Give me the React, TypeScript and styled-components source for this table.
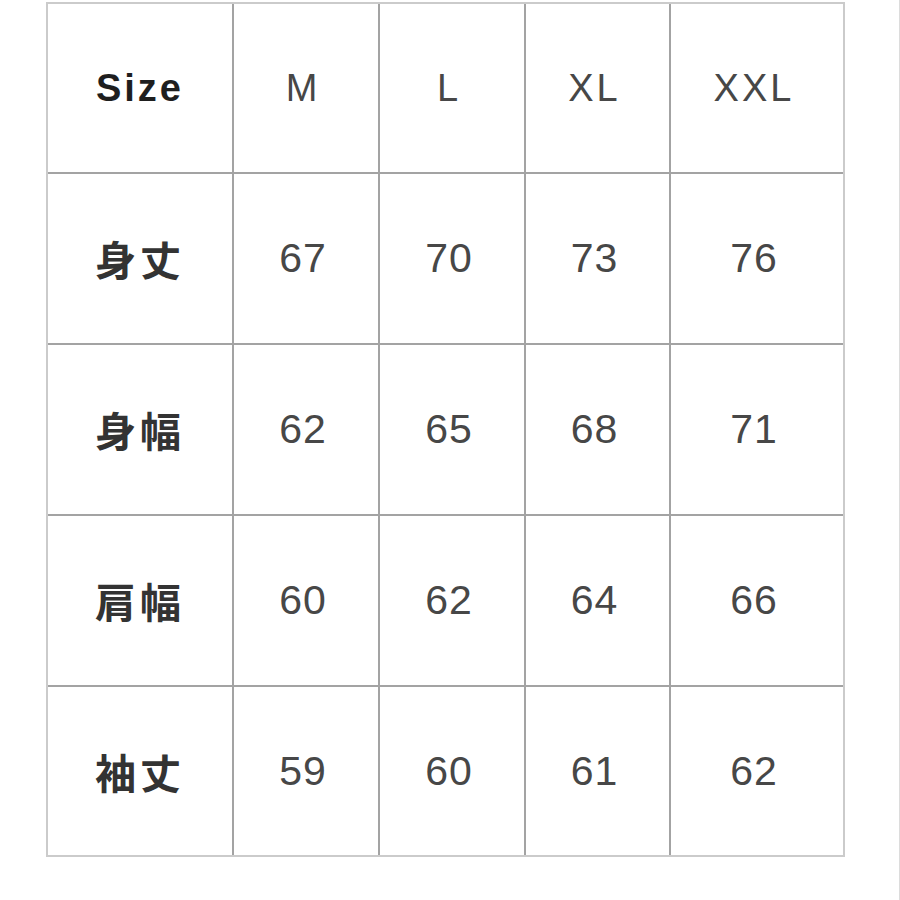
import React from "react";
import styled, { createGlobalStyle } from "styled-components";

const Global = createGlobalStyle`
  html, body { margin: 0; padding: 0; background: #ffffff; }
  * { box-sizing: border-box; }
`;

const Page = styled.div`
  width: 900px;
  height: 900px;
  padding: 2px 0 0 46px;
  border-right: 1px solid #dcdcdc;
  background: #ffffff;
`;

const Grid = styled.div`
  display: grid;
  grid-template-columns: 184px 144px 144px 143px 172px;
  grid-template-rows: 168px 169px 169px 169px 168px;
  gap: 2px;
  width: fit-content;
  background: #a3a3a3;
  border: 2px solid #cbcbcb;
`;

const Cell = styled.div<{ $kind: "corner" | "head" | "label" | "value" }>`
  background: #ffffff;
  display: flex;
  align-items: center;
  justify-content: center;
  padding-right: ${(p) => (p.$kind === "head" || p.$kind === "value" ? "6px" : "0")};
  font-family: ${(p) =>
    p.$kind === "label"
      ? '"Noto Sans CJK JP", "Noto Sans CJK SC", sans-serif'
      : '"Liberation Sans", Arial, sans-serif'};
  font-weight: ${(p) => (p.$kind === "corner" || p.$kind === "label" ? 700 : 400)};
  font-size: ${(p) => (p.$kind === "label" ? "41px" : p.$kind === "value" ? "41px" : "38px")};
  letter-spacing: ${(p) => (p.$kind === "label" ? "4px" : p.$kind === "value" ? "1px" : "3px")};
  color: ${(p) => (p.$kind === "corner" ? "#1e1e1e" : p.$kind === "label" ? "#333333" : "#474747")};
  line-height: 1;
`;

const sizes = ["M", "L", "XL", "XXL"];
const rows: { label: string; values: string[] }[] = [
  { label: "身丈", values: ["67", "70", "73", "76"] },
  { label: "身幅", values: ["62", "65", "68", "71"] },
  { label: "肩幅", values: ["60", "62", "64", "66"] },
  { label: "袖丈", values: ["59", "60", "61", "62"] },
];

export default function App() {
  return (
    <>
      <Global />
      <Page>
        <Grid>
          <Cell $kind="corner">Size</Cell>
          {sizes.map((s) => (
            <Cell key={s} $kind="head">
              {s}
            </Cell>
          ))}
          {rows.map((r) => (
            <React.Fragment key={r.label}>
              <Cell $kind="label">{r.label}</Cell>
              {r.values.map((v, i) => (
                <Cell key={i} $kind="value">
                  {v}
                </Cell>
              ))}
            </React.Fragment>
          ))}
        </Grid>
      </Page>
    </>
  );
}
